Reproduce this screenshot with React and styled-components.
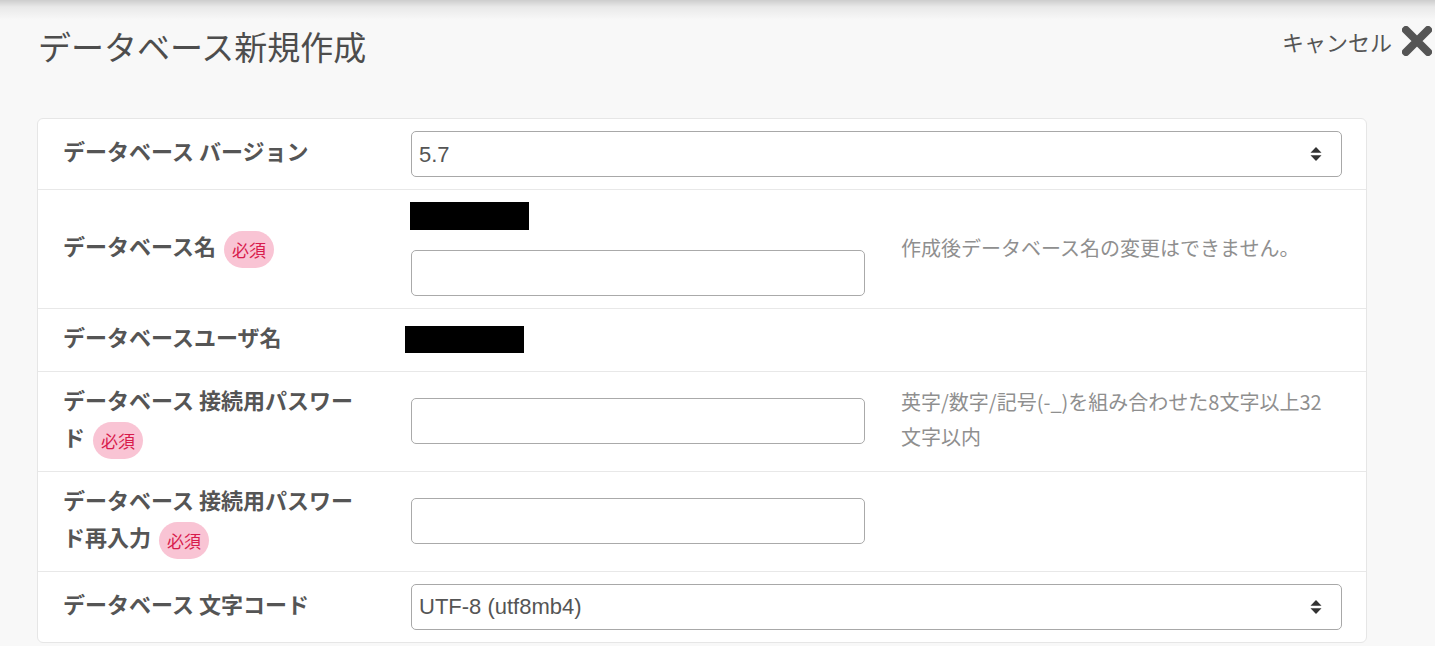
import React from "react";
import styled, { createGlobalStyle } from "styled-components";

const GlobalStyle = createGlobalStyle`
  html, body {
    margin: 0;
    padding: 0;
    background: #f8f8f8;
  }
  body {
    font-family: "Noto Sans CJK JP", "Noto Sans", sans-serif;
    color: #555;
  }
`;

const Page = styled.div`
  min-height: 646px;
  background: linear-gradient(
    to bottom,
    #cdcdcd 0px,
    #e9e9e9 7px,
    #f8f8f8 20px
  );
`;

const Header = styled.div`
  display: flex;
  justify-content: space-between;
  align-items: flex-start;
  height: 118px;
  box-sizing: border-box;
  padding: 26px 3px 0 38px;
`;

const Title = styled.h1`
  margin: 0;
  font-size: 33px;
  line-height: 40px;
  font-weight: 400;
  color: #4d4d4d;
`;

const Cancel = styled.button`
  display: flex;
  align-items: center;
  gap: 10px;
  border: 0;
  padding: 0;
  background: none;
  font-family: "Noto Sans CJK JP", sans-serif;
  font-size: 22px;
  line-height: 30px;
  color: #555;
  cursor: pointer;
`;

const Card = styled.div`
  margin-left: 37px;
  width: 1330px;
  box-sizing: border-box;
  background: #fff;
  border: 1px solid #e6e6e6;
  border-radius: 6px;
`;

const Row = styled.div`
  display: grid;
  grid-template-columns: 373px 1fr;
  align-items: center;
  padding: 12px 24px 12px 0;
  border-bottom: 1px solid #e8e8e8;
  &:last-child {
    border-bottom: 0;
  }
`;

/* the CJK glyphs sit a little low in their line box, so lift them by 3px */
const Label = styled.div`
  margin-top: -3px;
  padding: 0 46px 3px 25px;
  font-size: 22px;
  line-height: 37.5px;
  font-weight: 700;
  color: #555;
`;

const Badge = styled.span`
  display: inline-block;
  vertical-align: middle;
  margin: -8px 0 -8px 8px;
  padding: 8px 8px;
  font-size: 17px;
  line-height: 21px;
  font-weight: 400;
  color: #d81b4c;
  background: #f9c4d4;
  border-radius: 19px;
`;

const Field = styled.div`
  display: flex;
  align-items: center;
  gap: 36px;
`;

const Stack = styled.div`
  display: flex;
  flex-direction: column;
  gap: 20px;
`;

const Redacted = styled.div`
  width: ${(p) => p.w}px;
  height: ${(p) => p.h}px;
  margin-left: ${(p) => p.offset || 0}px;
  background: #000;
`;

const Input = styled.input`
  width: 454px;
  height: 46px;
  box-sizing: border-box;
  border: 1px solid #aaa;
  border-radius: 5px;
  padding: 0 8px;
  font-size: 22px;
  font-family: "Liberation Sans", sans-serif;
  color: #555;
  background: #fff;
`;

const SelectWrap = styled.div`
  position: relative;
  width: 100%;
`;

const Select = styled.select`
  appearance: none;
  width: 100%;
  height: 46px;
  box-sizing: border-box;
  border: 1px solid #a8a8a8;
  border-radius: 5px;
  padding: 0 40px 0 7px;
  font-family: "Liberation Sans", sans-serif;
  font-size: 22px;
  color: #555;
  background: #fff;
`;

const Caret = styled.svg`
  position: absolute;
  right: 20px;
  top: 50%;
  transform: translateY(-50%);
  pointer-events: none;
`;

const Help = styled.p`
  margin: 0 0 4px;
  width: 425px;
  font-size: 20px;
  line-height: 35px;
  color: #8f8f8f;
`;

const SelectBox = ({ value }) => (
  <SelectWrap>
    <Select defaultValue={value}>
      <option value={value}>{value}</option>
    </Select>
    <Caret width="12" height="15" viewBox="0 0 12 15">
      <path d="M6 0.5 L11.5 6.2 H0.5 Z" fill="#333" />
      <path d="M6 14.5 L11.5 8.8 H0.5 Z" fill="#333" />
    </Caret>
  </SelectWrap>
);

const CloseIcon = () => (
  <svg width="30" height="30" viewBox="0 0 30 30">
    <path
      d="M4 4 L26 26 M26 4 L4 26"
      stroke="#555"
      strokeWidth="8"
      strokeLinecap="round"
    />
  </svg>
);

const Required = () => <Badge>必須</Badge>;

export default function App() {
  return (
    <Page>
      <GlobalStyle />
      <Header>
        <Title>データベース新規作成</Title>
        <Cancel>
          キャンセル
          <CloseIcon />
        </Cancel>
      </Header>
      <Card>
        <Row>
          <Label>データベース バージョン</Label>
          <SelectBox value="5.7" />
        </Row>
        <Row>
          <Label>
            データベース名
            <Required />
          </Label>
          <Field>
            <Stack>
              <Redacted w={119} h={28} offset={-1} />
              <Input type="text" />
            </Stack>
            <Help>作成後データベース名の変更はできません。</Help>
          </Field>
        </Row>
        <Row>
          <Label>データベースユーザ名</Label>
          <Field>
            <Redacted w={119} h={27} offset={-6} />
          </Field>
        </Row>
        <Row>
          <Label>
            データベース 接続用パスワード
            <Required />
          </Label>
          <Field>
            <Input type="password" />
            <Help>英字/数字/記号(-_)を組み合わせた8文字以上32文字以内</Help>
          </Field>
        </Row>
        <Row>
          <Label>
            データベース 接続用パスワード再入力
            <Required />
          </Label>
          <Field>
            <Input type="password" />
          </Field>
        </Row>
        <Row>
          <Label>データベース 文字コード</Label>
          <SelectBox value="UTF-8 (utf8mb4)" />
        </Row>
      </Card>
    </Page>
  );
}
